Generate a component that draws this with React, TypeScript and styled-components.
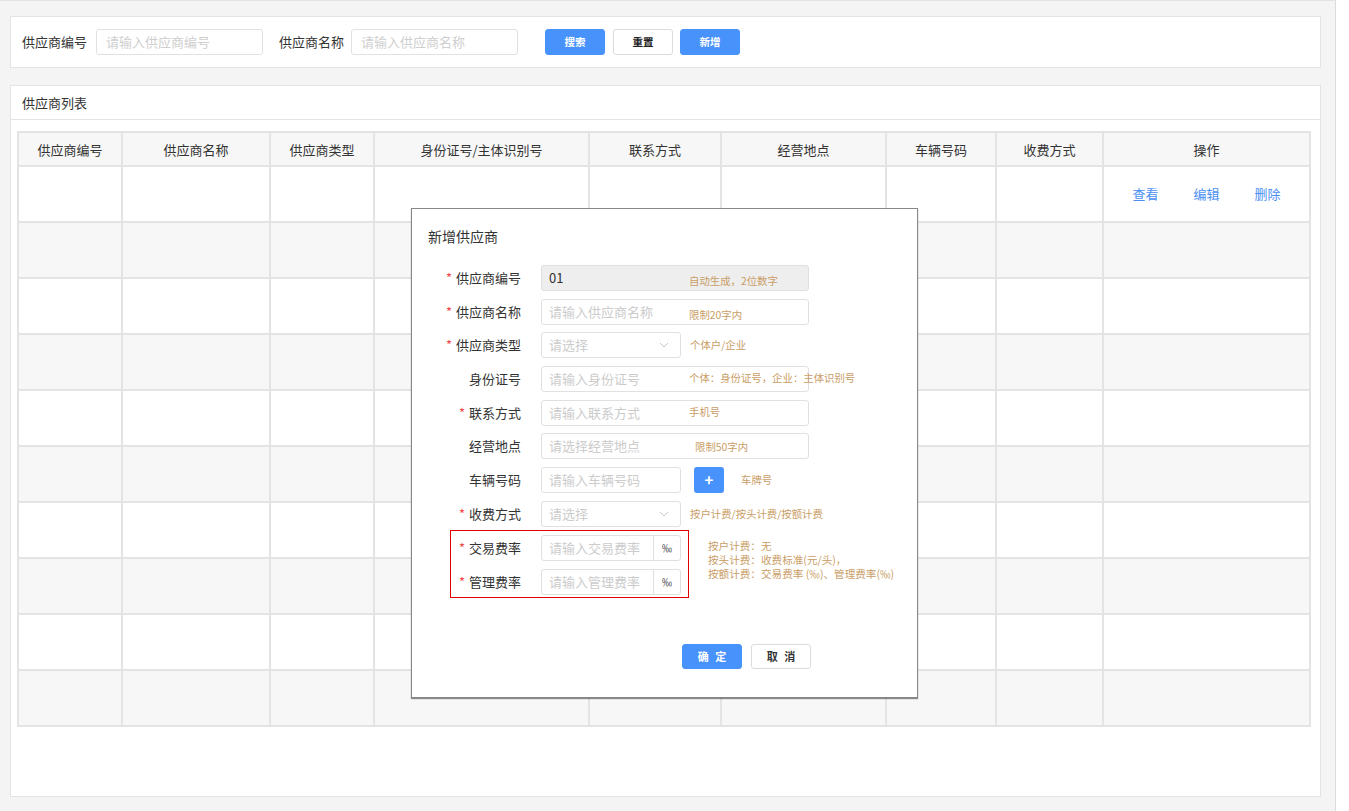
import React from "react";
import styled, { createGlobalStyle } from "styled-components";

const GlobalStyle = createGlobalStyle`
  html, body { margin: 0; padding: 0; background: #ffffff; }
  body { font-family: "Noto Sans CJK SC", "Noto Sans", sans-serif; color: #333; }
  * { box-sizing: border-box; }
`;

const BLUE = "#4893fb";
const HINT = "#c99d66";

const Page = styled.div`
  position: relative;
  width: 1336px;
  height: 811px;
  background: #f4f4f4;
  border-top: 1px solid #e4e4e4;
  border-right: 1px solid #dcdcdc;
  padding: 15px 0 0 10px;
  display: flex;
  flex-direction: column;
  gap: 17px;
`;

const SearchPanel = styled.div`
  width: 1311px;
  height: 52px;
  background: #fff;
  border: 1px solid #e3e3e3;
  display: flex;
  align-items: center;
  padding-left: 11px;
`;

const SearchLabel = styled.span<{ $mr: number }>`
  font-size: 13px;
  line-height: 18px;
  color: #333;
  margin-right: ${(p) => p.$mr}px;
`;

const SearchInput = styled.div<{ $mr: number }>`
  width: 167px;
  height: 26px;
  border: 1px solid #e1e1e1;
  border-radius: 3px;
  padding-left: 9px;
  font-size: 13px;
  line-height: 24px;
  color: #cfcfcf;
  margin-right: ${(p) => p.$mr}px;
`;

const Btn = styled.button<{ $primary?: boolean; $ml?: number }>`
  width: 60px;
  height: 26px;
  border-radius: 3px;
  border: 1px solid ${(p) => (p.$primary ? BLUE : "#dcdcdc")};
  background: ${(p) => (p.$primary ? BLUE : "#fff")};
  color: ${(p) => (p.$primary ? "#fff" : "#222")};
  font-family: inherit;
  font-size: 10.5px;
  font-weight: 700;
  padding: 0;
  margin-left: ${(p) => p.$ml ?? 0}px;
  line-height: 24px;
`;

const ListPanel = styled.div`
  width: 1311px;
  height: 712px;
  background: #fff;
  border: 1px solid #e3e3e3;
`;

const ListHeader = styled.div`
  height: 34px;
  border-bottom: 1px solid #e3e3e3;
  padding-left: 11px;
  font-size: 13px;
  line-height: 33px;
  color: #333;
`;

const Table = styled.table`
  margin: 11px 0 0 6px;
  border-collapse: collapse;
  table-layout: fixed;
  width: 1292px;
`;

const Th = styled.th`
  height: 34px;
  background: #f7f7f7;
  border: 2px solid #e4e4e4;
  font-size: 13px;
  font-weight: 400;
  color: #333;
  text-align: center;
  padding: 0;
`;

const Td = styled.td<{ $grey: boolean }>`
  height: 56px;
  background: ${(p) => (p.$grey ? "#f7f7f7" : "#fff")};
  border: 2px solid #e4e4e4;
  padding: 0;
  text-align: center;
`;

const Ops = styled.div`
  display: flex;
  justify-content: center;
  gap: 35px;
`;

const OpLink = styled.span`
  font-size: 13px;
  color: #4b8ff2;
  line-height: 18px;
`;

const Modal = styled.div`
  position: absolute;
  left: 411px;
  top: 207px;
  width: 507px;
  height: 490px;
  background: #fff;
  border: 1px solid #888;
  box-shadow: 0 1px 1px rgba(0, 0, 0, 0.45);
  display: flex;
  flex-direction: column;
`;

const ModalTitle = styled.div`
  padding: 17px 0 0 16px;
  font-size: 14px;
  line-height: 20px;
  color: #333;
`;

const Form = styled.div`
  margin-top: 19px;
  display: flex;
  flex-direction: column;
  gap: 7.7px;
`;

const Row = styled.div`
  display: flex;
  align-items: center;
  height: 26px;
`;

const Label = styled.div<{ $w: number }>`
  width: ${(p) => p.$w}px;
  text-align: right;
  font-size: 13px;
  line-height: 18px;
  color: #333;
  white-space: nowrap;
`;

const Star = styled.span`
  color: #f04848;
  margin-right: 4px;
`;

const Control = styled.div`
  position: relative;
  margin-left: 20px;
  display: flex;
  align-items: center;
`;

const Input = styled.div<{ $w: number; $disabled?: boolean }>`
  position: relative;
  width: ${(p) => p.$w}px;
  height: 26px;
  border: 1px solid #e0e0e0;
  border-radius: 3px;
  background: ${(p) => (p.$disabled ? "#eeeeee" : "#fff")};
  padding-left: 7px;
  font-size: 13px;
  line-height: 24px;
  color: ${(p) => (p.$disabled ? "#333" : "#cccccc")};
  display: flex;
  align-items: center;
  overflow: hidden;
`;

const InputText = styled.span`
  flex: 1;
  white-space: nowrap;
`;

const Chevron = styled.svg`
  width: 10px;
  height: 6px;
  margin-right: 11px;
`;

const Suffix = styled.span`
  width: 27px;
  height: 100%;
  border-left: 1px solid #e0e0e0;
  color: #333;
  font-size: 10px;
  text-align: center;
  line-height: 24px;
`;

const OverlayHint = styled.span<{ $left: number; $dy: number }>`
  position: absolute;
  left: ${(p) => p.$left}px;
  top: ${(p) => 6 + p.$dy}px;
  font-size: 10.4px;
  line-height: 14px;
  color: ${HINT};
  white-space: nowrap;
`;

const Hint = styled.span<{ $ml: number }>`
  margin-left: ${(p) => p.$ml}px;
  font-size: 10.4px;
  line-height: 14px;
  color: ${HINT};
  white-space: nowrap;
`;

const PlusBtn = styled.div`
  width: 30px;
  height: 26px;
  margin-left: 13px;
  border-radius: 3px;
  background: ${BLUE};
  color: #fff;
  font-size: 15px;
  font-weight: 700;
  line-height: 25px;
  text-align: center;
`;

const FeeSection = styled.div`
  display: flex;
  align-items: flex-start;
  margin-top: -4.7px;
  margin-left: 38px;
`;

const RedBox = styled.div`
  border: 1px solid #e00000;
  padding: 4px 7px 2px 0;
  display: flex;
  flex-direction: column;
  gap: 8px;
`;

const FeeHint = styled.div`
  margin: 9px 0 0 19px;
  font-size: 10.6px;
  line-height: 14px;
  color: ${HINT};
  white-space: nowrap;
`;

const Footer = styled.div`
  margin-top: 46px;
  padding-left: 270px;
  display: flex;
  gap: 9px;
`;

const ModalBtn = styled.button<{ $primary?: boolean }>`
  width: 60px;
  height: 25px;
  border-radius: 3px;
  border: 1px solid ${(p) => (p.$primary ? BLUE : "#dcdcdc")};
  background: ${(p) => (p.$primary ? BLUE : "#fff")};
  color: ${(p) => (p.$primary ? "#fff" : "#333")};
  font-family: inherit;
  font-size: 11px;
  font-weight: 700;
  letter-spacing: 2px;
  padding: 0 0 0 2px;
  line-height: 23px;
`;

const columns = [
  { t: "供应商编号", w: 104 },
  { t: "供应商名称", w: 148 },
  { t: "供应商类型", w: 104 },
  { t: "身份证号/主体识别号", w: 215 },
  { t: "联系方式", w: 132 },
  { t: "经营地点", w: 165 },
  { t: "车辆号码", w: 110 },
  { t: "收费方式", w: 107 },
  { t: "操作", w: 207 },
];

const ChevronIcon = () => (
  <Chevron viewBox="0 0 10 6">
    <polyline points="1,1 5,5 9,1" fill="none" stroke="#c8c8c8" strokeWidth="1" />
  </Chevron>
);

export default function App() {
  const rows = Array.from({ length: 10 }, (_, i) => i);
  return (
    <>
      <GlobalStyle />
      <Page>
        <SearchPanel>
          <SearchLabel $mr={9}>供应商编号</SearchLabel>
          <SearchInput $mr={16}>请输入供应商编号</SearchInput>
          <SearchLabel $mr={7}>供应商名称</SearchLabel>
          <SearchInput $mr={0}>请输入供应商名称</SearchInput>
          <Btn $primary $ml={27}>搜索</Btn>
          <Btn $ml={8}>重置</Btn>
          <Btn $primary $ml={7}>新增</Btn>
        </SearchPanel>

        <ListPanel>
          <ListHeader>供应商列表</ListHeader>
          <Table>
            <colgroup>
              {columns.map((c) => (
                <col key={c.t} style={{ width: c.w }} />
              ))}
            </colgroup>
            <thead>
              <tr>
                {columns.map((c) => (
                  <Th key={c.t}>{c.t}</Th>
                ))}
              </tr>
            </thead>
            <tbody>
              {rows.map((r) => (
                <tr key={r}>
                  {columns.map((c, ci) => (
                    <Td key={c.t} $grey={r % 2 === 1}>
                      {r === 0 && ci === columns.length - 1 ? (
                        <Ops>
                          <OpLink>查看</OpLink>
                          <OpLink>编辑</OpLink>
                          <OpLink>删除</OpLink>
                        </Ops>
                      ) : null}
                    </Td>
                  ))}
                </tr>
              ))}
            </tbody>
          </Table>
        </ListPanel>

        <Modal>
          <ModalTitle>新增供应商</ModalTitle>
          <Form>
            <Row>
              <Label $w={109}><Star>*</Star>供应商编号</Label>
              <Control>
                <Input $w={268} $disabled><InputText>01</InputText></Input>
                <OverlayHint $left={148} $dy={3}>自动生成，2位数字</OverlayHint>
              </Control>
            </Row>
            <Row>
              <Label $w={109}><Star>*</Star>供应商名称</Label>
              <Control>
                <Input $w={268}><InputText>请输入供应商名称</InputText></Input>
                <OverlayHint $left={148} $dy={3}>限制20字内</OverlayHint>
              </Control>
            </Row>
            <Row>
              <Label $w={109}><Star>*</Star>供应商类型</Label>
              <Control>
                <Input $w={140}><InputText>请选择</InputText><ChevronIcon /></Input>
                <Hint $ml={9}>个体户/企业</Hint>
              </Control>
            </Row>
            <Row>
              <Label $w={109}>身份证号</Label>
              <Control>
                <Input $w={268}><InputText>请输入身份证号</InputText></Input>
                <OverlayHint $left={148} $dy={-1}>个体：身份证号，企业：主体识别号</OverlayHint>
              </Control>
            </Row>
            <Row>
              <Label $w={109}><Star>*</Star>联系方式</Label>
              <Control>
                <Input $w={268}><InputText>请输入联系方式</InputText></Input>
                <OverlayHint $left={148} $dy={-1}>手机号</OverlayHint>
              </Control>
            </Row>
            <Row>
              <Label $w={109}>经营地点</Label>
              <Control>
                <Input $w={268}><InputText>请选择经营地点</InputText></Input>
                <OverlayHint $left={154} $dy={1}>限制50字内</OverlayHint>
              </Control>
            </Row>
            <Row>
              <Label $w={109}>车辆号码</Label>
              <Control>
                <Input $w={140}><InputText>请输入车辆号码</InputText></Input>
                <PlusBtn>+</PlusBtn>
                <Hint $ml={17}>车牌号</Hint>
              </Control>
            </Row>
            <Row>
              <Label $w={109}><Star>*</Star>收费方式</Label>
              <Control>
                <Input $w={140}><InputText>请选择</InputText><ChevronIcon /></Input>
                <Hint $ml={9}>按户计费/按头计费/按额计费</Hint>
              </Control>
            </Row>
            <FeeSection>
              <RedBox>
                <Row>
                  <Label $w={70}><Star>*</Star>交易费率</Label>
                  <Control>
                    <Input $w={140}><InputText>请输入交易费率</InputText><Suffix>‰</Suffix></Input>
                  </Control>
                </Row>
                <Row>
                  <Label $w={70}><Star>*</Star>管理费率</Label>
                  <Control>
                    <Input $w={140}><InputText>请输入管理费率</InputText><Suffix>‰</Suffix></Input>
                  </Control>
                </Row>
              </RedBox>
              <FeeHint>
                按户计费：无
                <br />
                按头计费：收费标准(元/头)，
                <br />
                按额计费：交易费率 (‰)、管理费率(‰)
              </FeeHint>
            </FeeSection>
          </Form>
          <Footer>
            <ModalBtn $primary>确 定</ModalBtn>
            <ModalBtn>取 消</ModalBtn>
          </Footer>
        </Modal>
      </Page>
    </>
  );
}
